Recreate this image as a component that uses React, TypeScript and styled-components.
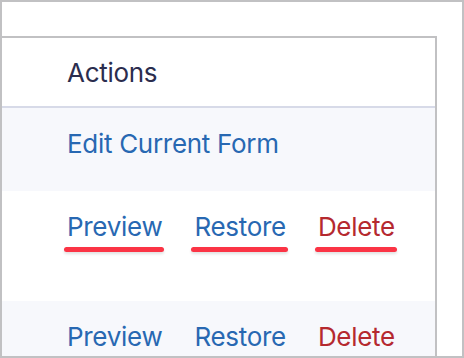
import styled, { createGlobalStyle } from "styled-components"

const Global = createGlobalStyle`
  html, body {
    margin: 0;
    padding: 0;
    background: #fff;
  }
  * {
    box-sizing: border-box;
  }
`

const Frame = styled.div`
  width: 464px;
  height: 358px;
  border: 2px solid #c1c1c3;
  background: #fff;
  overflow: hidden;
  padding: 34px 25px 0 0;
  font-family: Inter, "Noto Sans", sans-serif;
`

const Table = styled.div`
  border-top: 2px solid #c1c1c3;
  border-right: 2px solid #c1c1c3;
  height: 400px;
`

const Row = styled.div<{ $height: number; $shaded?: boolean; $head?: boolean }>`
  display: flex;
  align-items: ${(p) => (p.$head ? "center" : "flex-start")};
  height: ${(p) => p.$height}px;
  padding: ${(p) => (p.$head ? "0" : "16px")} 0 0 65px;
  background: ${(p) => (p.$shaded ? "#f7f8fc" : "#fff")};
  border-bottom: ${(p) => (p.$head ? "2px solid #d7dae8" : "none")};
  gap: 32px;
`

const Heading = styled.span`
  font-size: 26px;
  line-height: 39px;
  letter-spacing: -0.3px;
  color: #2b2d4e;
`

const Action = styled.a<{ $danger?: boolean; $marked?: boolean }>`
  position: relative;
  font-size: 26px;
  line-height: 39px;
  letter-spacing: -0.3px;
  color: ${(p) => (p.$danger ? "#b5292f" : "#2868b2")};
  text-decoration: none;
  cursor: pointer;

  &::after {
    content: "";
    display: ${(p) => (p.$marked ? "block" : "none")};
    position: absolute;
    left: -3px;
    right: -2px;
    top: 40px;
    height: 5px;
    border-radius: 3px;
    background: #fb3445;
    box-shadow: 0 2px 3px rgba(0, 0, 0, 0.12);
  }
`

export default function App() {
  return (
    <>
      <Global />
      <Frame>
        <Table>
          <Row $head $height={70}>
            <Heading>Actions</Heading>
          </Row>
          <Row $shaded $height={83}>
            <Action>Edit Current Form</Action>
          </Row>
          <Row $height={110}>
            <Action $marked>Preview</Action>
            <Action $marked>Restore</Action>
            <Action $marked $danger>Delete</Action>
          </Row>
          <Row $shaded $height={100}>
            <Action>Preview</Action>
            <Action>Restore</Action>
            <Action $danger>Delete</Action>
          </Row>
        </Table>
      </Frame>
    </>
  )
}
